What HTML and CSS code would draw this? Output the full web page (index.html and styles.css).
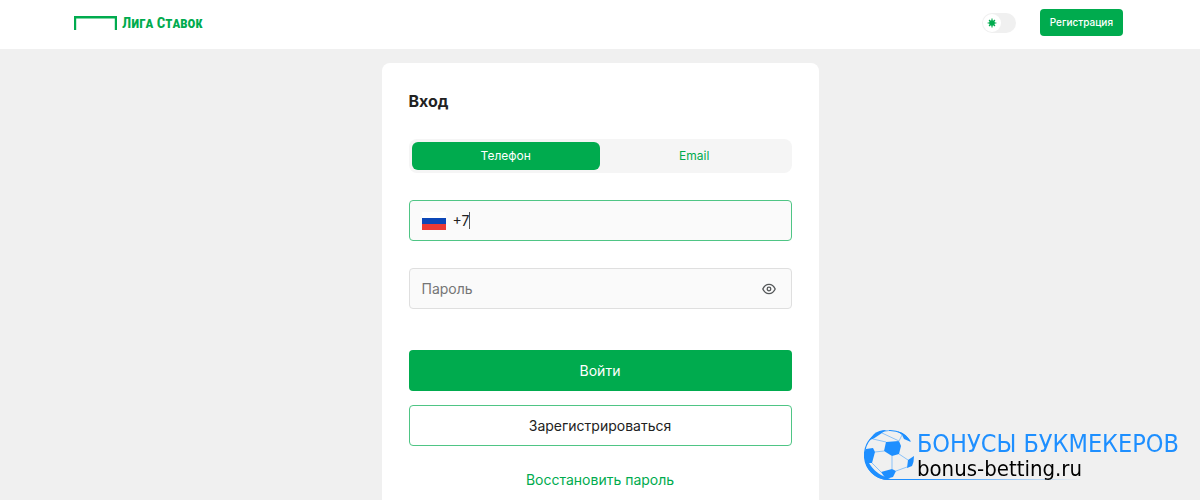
FILE: index.html
```html
<!DOCTYPE html>
<html lang="ru">
<head>
    <meta charset="UTF-8">
    <meta name="viewport" content="width=device-width, initial-scale=1.0">
    <title>Лига Ставок - Вход</title>
    <link rel="stylesheet" href="styles.css">
</head>
<body>

<header class="header">
    <a class="logo" href="#">
        <svg width="43" height="14" viewBox="0 0 43 14" aria-hidden="true">
            <path d="M1 14V1.200H42V14" fill="none" stroke="#00ab4e" stroke-width="2.400"/>
        </svg>
        <span class="logo-text">Лига Ставок</span>
    </a>
    <div class="header-actions">
        <label class="theme">
            <input type="checkbox" class="theme-input" aria-label="Тёмная тема">
            <span class="theme-knob">
                <svg width="10" height="10" viewBox="0 0 10 10" aria-hidden="true">
                    <circle cx="5" cy="5" r="2.8" fill="#00ab4e"/>
                    <path d="M5 .6V9.4M.6 5H9.4M2 2L8 8M8 2L2 8" stroke="#00ab4e" stroke-width="1.1"/>
                </svg>
            </span>
        </label>
        <button type="button" class="btn-small">Регистрация</button>
    </div>
</header>

<main class="card">
    <h1>Вход</h1>
    <form>
        <div class="tabs">
            <button type="button" class="tab active">Телефон</button>
            <button type="button" class="tab">Email</button>
        </div>

        <label class="field focused">
            <svg class="flag" width="24" height="18" viewBox="0 0 24 18" aria-hidden="true">
                <rect width="24" height="6" fill="#fff"/>
                <rect y="6" width="24" height="6" fill="#0c47b7"/>
                <rect y="12" width="24" height="6" fill="#eb3a35"/>
            </svg>
            <input type="tel" class="phone" value="+7" aria-label="Телефон">
            <span class="caret"></span>
        </label>

        <div class="field">
            <input type="password" class="password" placeholder="Пароль" aria-label="Пароль">
            <button type="button" class="eye" aria-label="Показать пароль">
                <svg width="14" height="12" viewBox="0 0 14 12" fill="none" stroke="#55585a" stroke-width="1.3" aria-hidden="true">
                    <path d="M.8 6C2.2 3 4.4 1.4 7 1.4S11.8 3 13.2 6C11.8 9 9.6 10.6 7 10.6S2.2 9 .8 6Z"/>
                    <circle cx="7" cy="6" r="1.8"/>
                </svg>
            </button>
        </div>

        <button type="submit" class="btn btn-primary">Войти</button>
        <button type="button" class="btn btn-outline">Зарегистрироваться</button>
        <a class="restore" href="#">Восстановить пароль</a>
    </form>
</main>

<a class="watermark" href="#">
    <svg width="53" height="52" viewBox="0 0 53 52" aria-hidden="true">
        <path d="M46 12A24.500 24.500 0 0 0 25 1.500A24.500 24.500 0 0 0 25 50.500H53" fill="none" stroke="#1e8fff" stroke-width="1.200"/>
        <path d="M2 18C1 34 10 46 30 51H24C6 50 -3 34 2 18Z" fill="#1e8fff"/>
        <g fill="#1e8fff">
            <path d="M22 13L35 12L37 17L35 25L28 27L20 22Z"/>
            <path d="M2 20L9 19L11 23L8 34L3 34Q0 27 2 20Z"/>
            <path d="M5 11L10 5Q15 1 22 1L18 4L9 10Z"/>
            <path d="M33 2Q42 4 47 13L40 10L38 6Z"/>
            <path d="M44 31L50 27Q50 33 48 37L43 39Z"/>
            <path d="M17 43L28 40L32 42L29 48L22 50Z"/>
        </g>
        <path d="M18 4L35 12L38 6M22 13L9 10M20 22L11 23M28 27V40M8 34L17 43M35 25L44 31M32 42L43 38" fill="none" stroke="#8bc2f8" stroke-width="1"/>
    </svg>
    <span class="watermark-text">
        <span class="watermark-title">БОНУСЫ БУКМЕКЕРОВ</span>
        <span class="watermark-site">bonus-betting.ru</span>
    </span>
</a>

</body>
</html>
```
FILE: styles.css
```css
* {
    box-sizing: border-box;
}
body {
    font-family: Inter, sans-serif;
    font-size: 14px;
    line-height: 20px;
    background-color: #f0f0f0;
    color: #222;
    margin: 0;
    height: 100vh;
    overflow: hidden;
}
button, input {
    font: inherit;
    color: inherit;
    border: none;
    margin: 0;
    padding: 0;
}
button {
    cursor: pointer;
}
a {
    color: #00ab4e;
    text-decoration: none;
}
svg {
    display: block;
    flex: none;
}
.header {
    display: flex;
    align-items: center;
    justify-content: space-between;
    padding: 9px 77px 13px 74px;
    background: #fff;
}
.logo {
    display: flex;
    align-items: center;
    gap: 5px;
}
.logo-text {
    font-family: "Roboto Condensed", Roboto, sans-serif;
    font-size: 15px;
    font-weight: bold;
    font-variant: small-caps;
}
.header-actions {
    display: flex;
    align-items: center;
    gap: 24px;
}
.theme {
    display: flex;
    width: 34px;
    padding: 1px;
    background: #f0f0f0;
    border-radius: 10px;
    cursor: pointer;
}
.theme-input {
    appearance: none;
}
.theme-knob {
    display: flex;
    align-items: center;
    justify-content: center;
    width: 18px;
    height: 18px;
    background: #fff;
    border-radius: 50%;
}
.btn-small {
    height: 27px;
    padding: 0 10px 2px;
    background: #00ab4e;
    color: #fff;
    border-radius: 4px;
    font-size: 10px;
    font-weight: 500;
}
.card {
    width: 90%;
    max-width: 437px;
    margin: 14px auto 0;
    padding: 28px 27px;
    background: #fff;
    border-radius: 8px;
}
h1 {
    margin: 0 0 28px;
    font-size: 16px;
    line-height: 20px;
}
.tabs {
    display: flex;
    padding: 3px;
    background: #f5f5f5;
    border-radius: 8px;
    margin-bottom: 27px;
}
.tab {
    flex: 1;
    height: 28px;
    border-radius: 6px;
    background: none;
    color: #00ab4e;
    font-size: 12px;
}
.tab.active {
    background: #00ab4e;
    color: #fff;
}
.field {
    display: flex;
    align-items: center;
    height: 41px;
    padding: 0 12px;
    margin-bottom: 27px;
    background: #fafafa;
    border: 1px solid #dfdfdf;
    border-radius: 4px;
}
.field.focused {
    border-color: #4fc585;
}
.field input {
    background: none;
    outline: none;
}
.flag {
    margin-right: 7px;
}
.phone {
    field-sizing: content;
}
.caret {
    width: 1px;
    height: 17px;
    background: #555;
}
.password {
    flex: 1;
}
.password::placeholder {
    color: #757575;
}
.eye {
    padding: 3px;
    background: none;
}
.btn {
    display: block;
    width: 100%;
    height: 41px;
    border-radius: 4px;
}
.btn-primary {
    margin: 41px 0 14px;
    background: #00ab4e;
    color: #fff;
}
.btn-outline {
    background: #fff;
    border: 1px solid #4fc585;
}
.restore {
    display: block;
    margin-top: 24px;
    text-align: center;
}
.watermark {
    position: fixed;
    right: 21px;
    bottom: 19px;
    display: flex;
    align-items: flex-start;
}
.watermark-text {
    display: flex;
    flex-direction: column;
    align-items: flex-start;
    font-family: "DejaVu Sans Condensed", "DejaVu Sans", sans-serif;
}
.watermark-title {
    color: #1e8fff;
    font-size: 25px;
    line-height: 29px;
}
.watermark-site {
    padding-bottom: 1px;
    background: linear-gradient(to right, #1e8fff, transparent) bottom / 100% 1px no-repeat;
    color: #000;
    font-size: 22px;
    line-height: 21px;
}
```
